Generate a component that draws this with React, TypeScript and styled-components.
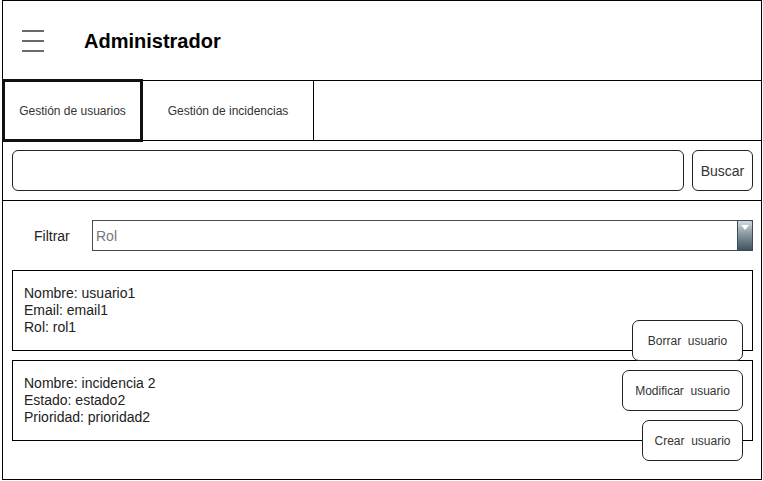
import styled, { createGlobalStyle } from "styled-components";

const GlobalStyle = createGlobalStyle`
  body {
    margin: 0;
    background: #fff;
    font-family: "Liberation Sans", Arial, sans-serif;
    color: #222;
  }
  * {
    box-sizing: border-box;
  }
`;

const FrameStyled = styled.div`
  width: 760px;
  height: 480px;
  margin-left: 2px;
  border: 1px solid #000;
  display: flex;
  flex-direction: column;
`;

const HeaderStyled = styled.div`
  height: 80px;
  border-bottom: 1px solid #000;
  display: flex;
  align-items: center;
  padding-left: 19px;
  gap: 40px;
`;

const BurgerStyled = styled.div`
  width: 22px;
  display: flex;
  flex-direction: column;
  gap: 8px;

  span {
    display: block;
    height: 2px;
    background: #6a6a6a;
  }
`;

const TitleStyled = styled.h1`
  margin: 0;
  font-size: 20px;
  font-weight: bold;
  color: #000;
  padding-top: 2px;
`;

const TabsStyled = styled.div`
  height: 60px;
  border-bottom: 1px solid #000;
  display: flex;
`;

const TabStyled = styled.div<{ $active?: boolean; $width: number }>`
  width: ${(p) => p.$width}px;
  display: flex;
  align-items: center;
  justify-content: center;
  font-size: 12px;
  color: #333;
  ${(p) =>
    p.$active
      ? `
    border: 3px solid #111;
    margin: -2px 0 -2px -1px;
    position: relative;
    z-index: 1;
  `
      : `
    border-right: 1px solid #000;
  `}
`;

const SearchRowStyled = styled.div`
  height: 60px;
  border-bottom: 1px solid #000;
  display: flex;
  align-items: flex-start;
  padding: 9px 8px 0 9px;
  gap: 8px;
`;

const SearchInputStyled = styled.input`
  flex: 1;
  height: 41px;
  border: 1px solid #222;
  border-radius: 6px;
  outline: none;
  font: inherit;
  font-size: 14px;
  padding: 0 8px;
`;

const ButtonStyled = styled.button<{ $width: number }>`
  width: ${(p) => p.$width}px;
  height: 41px;
  border: 1px solid #222;
  border-radius: 7px;
  background: #fff;
  font-family: "Liberation Sans", Arial, sans-serif;
  font-size: 12px;
  color: #333;
  white-space: pre;
  padding: 0;
  cursor: pointer;
`;

const SearchButtonStyled = styled(ButtonStyled)`
  font-size: 14px;
  border-radius: 6px;
`;

const MainStyled = styled.div`
  flex: 1;
  padding: 19px 8px 0 9px;
  display: flex;
  flex-direction: column;
  gap: 19px;
`;

const FilterRowStyled = styled.div`
  display: flex;
  align-items: center;
  height: 31px;
`;

const FilterLabelStyled = styled.label`
  width: 80px;
  padding-left: 22px;
  font-size: 14px;
  color: #222;
`;

const SelectStyled = styled.div`
  flex: 1;
  height: 31px;
  border: 1px solid #4a4a4a;
  display: flex;
  align-items: center;
  justify-content: space-between;
  padding-left: 3px;
  font-size: 14px;
  color: #777;
  position: relative;
`;

const SelectArrowStyled = styled.div`
  width: 16px;
  height: 31px;
  margin: -1px -1px -1px 0;
  border: 1px solid #3b4b56;
  border-radius: 0 2px 2px 0;
  background: linear-gradient(#d4dadd, #8a98a2 45%, #3d5462);
  display: flex;
  justify-content: center;
  padding-top: 4px;

  &::after {
    content: "";
    border-left: 4px solid transparent;
    border-right: 4px solid transparent;
    border-top: 5px solid #fff;
    height: 0;
  }
`;

const ListStyled = styled.div`
  display: flex;
  flex-direction: column;
  gap: 9px;
`;

const CardStyled = styled.div`
  position: relative;
  height: 81px;
  border: 1px solid #000;
  display: flex;
  flex-direction: column;
  justify-content: center;
  padding-left: 11px;
  font-size: 14px;
  line-height: 17px;
  color: #222;
`;

const CardActionStyled = styled(ButtonStyled)<{ $top: number }>`
  position: absolute;
  right: 9px;
  top: ${(p) => p.$top}px;
  z-index: 1;
`;

const Header = () => (
  <HeaderStyled>
    <BurgerStyled>
      <span />
      <span />
      <span />
    </BurgerStyled>
    <TitleStyled>Administrador</TitleStyled>
  </HeaderStyled>
);

const Tabs = () => (
  <TabsStyled>
    <TabStyled $active $width={141}>
      Gestión de usuarios
    </TabStyled>
    <TabStyled $width={171}>Gestión de incidencias</TabStyled>
  </TabsStyled>
);

const Search = () => (
  <SearchRowStyled>
    <SearchInputStyled />
    <SearchButtonStyled $width={61}>Buscar</SearchButtonStyled>
  </SearchRowStyled>
);

const App = () => {
  return (
    <>
      <GlobalStyle />
      <FrameStyled>
        <Header />
        <Tabs />
        <Search />
        <MainStyled>
          <FilterRowStyled>
            <FilterLabelStyled>Filtrar</FilterLabelStyled>
            <SelectStyled>
              Rol
              <SelectArrowStyled />
            </SelectStyled>
          </FilterRowStyled>
          <ListStyled>
            <CardStyled>
              <div>Nombre: usuario1</div>
              <div>Email: email1</div>
              <div>Rol: rol1</div>
              <CardActionStyled $width={111} $top={49}>
                {"Borrar  usuario"}
              </CardActionStyled>
            </CardStyled>
            <CardStyled>
              <div>Nombre: incidencia 2</div>
              <div>Estado: estado2</div>
              <div>Prioridad: prioridad2</div>
              <CardActionStyled $width={121} $top={9}>
                {"Modificar  usuario"}
              </CardActionStyled>
              <CardActionStyled $width={101} $top={59}>
                {"Crear  usuario"}
              </CardActionStyled>
            </CardStyled>
          </ListStyled>
        </MainStyled>
      </FrameStyled>
    </>
  );
};

export default App;
